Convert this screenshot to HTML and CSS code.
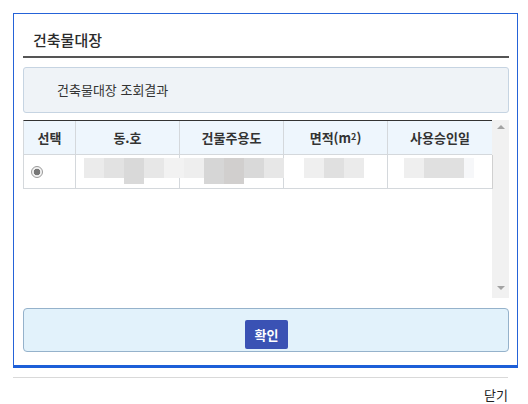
FILE: index.html
```html
<!DOCTYPE html>
<html lang="ko">
<head>
<meta charset="utf-8">
<link rel="stylesheet" href="styles.css">
</head>
<body>
<div class="panel">
  <div class="title">건축물대장</div>
  <div class="info">건축물대장 조회결과</div>
  <div class="tablewrap">
    <div class="grid">
      <div class="th">선택</div>
      <div class="th">동.호</div>
      <div class="th">건물주용도</div>
      <div class="th">면적(m<sup>2</sup>)</div>
      <div class="th last">사용승인일</div>
      <div class="td first"><span class="radio"></span></div>
      <div class="td blur b2">
        <i class="m c1"></i><i class="m c2"></i><i class="m c3 tall"></i><i class="m c4"></i><i class="m c5"></i>
      </div>
      <div class="td blur b3">
        <i class="m c6"></i><i class="m c7 tall"></i><i class="m c8 tall"></i><i class="m c3"></i><i class="m c4"></i>
      </div>
      <div class="td blur b4">
        <i class="m c9"></i><i class="m c10"></i><i class="m c11"></i>
      </div>
      <div class="td blur b5 last">
        <i class="m c9"></i><i class="m c10"></i><i class="m c10"></i><i class="m c12 half"></i>
      </div>
    </div>
    <div class="scroll">
      <span class="arr up"></span>
      <span class="arr down"></span>
    </div>
  </div>
  <div class="actions"><button class="btn">확인</button></div>
</div>
<div class="footer"><span class="close">닫기</span></div>
</body>
</html>
```
FILE: styles.css
```css
* { box-sizing: border-box; }
body {
  margin: 0;
  font-family: "Noto Sans CJK KR", "Noto Sans", sans-serif;
  color: #333;
  background: #fff;
}
.panel {
  margin: 13px 0 0 13px;
  width: 505px;
  height: 355px;
  border: 1px solid #2563d8;
  border-bottom: 3px solid #1d5fd8;
  padding: 0 8px 0 9px;
  display: flex;
  flex-direction: column;
}
.title {
  height: 44px;
  padding: 16px 0 0 10px;
  border-bottom: 2px solid #555;
  font-size: 15px;
  line-height: 20px;
  font-weight: 500;
  color: #2b2b2b;
}
.info {
  margin-top: 9px;
  height: 46px;
  border: 1px solid #c6d4e2;
  border-radius: 3px;
  background: #eff3f7;
  padding-left: 33px;
  font-size: 13px;
  line-height: 44px;
  color: #333;
}
.tablewrap {
  margin-top: 7px;
  height: 178px;
  display: flex;
  align-items: flex-start;
}
.grid {
  width: 469px;
  display: grid;
  grid-template-columns: 52px 104px 104px 104px 105px;
  grid-template-rows: 34px 34px;
  border-top: 1px solid #333;
  border-left: 1px solid #d4d8dc;
}
.th {
  background: #eef6fd;
  border-right: 1px solid #d4d8dc;
  border-bottom: 1px solid #d4d8dc;
  font-size: 13px;
  font-weight: 700;
  color: #333;
  display: flex;
  align-items: center;
  justify-content: center;
}
.th sup { font-size: 9px; line-height: 0; position: relative; top: -1px; }
.td {
  border-right: 1px solid #d4d8dc;
  border-bottom: 1px solid #d4d8dc;
  display: flex;
  align-items: center;
  justify-content: center;
  position: relative;
}
.first { justify-content: flex-start; padding-left: 7px; }
.last { border-right: 1px solid #d0d0d0; }
.radio {
  width: 12px;
  height: 12px;
  border-radius: 50%;
  border: 1px solid #999;
  background: radial-gradient(circle, #777 0 3px, #f2f2f2 3.6px);
}
.blur { justify-content: flex-start; align-items: flex-start; }
.m {
  display: block;
  width: 20px;
  height: 20px;
  flex: none;
}
.tall { height: 26px; }
.half { width: 10px; }
.b2 { padding: 3px 0 0 8px; }
.b3 { padding: 3px 0 0 4px; }
.b4 { padding: 3px 0 0 20px; }
.b5 { padding: 3px 0 0 16px; }
.b2 .c5 { margin-right: -15px; position: relative; z-index: 1; }
.c1 { background: #ebebeb; }
.c2 { background: #e2e2e2; }
.c3 { background: #d9d9d9; }
.c4 { background: #e7e7e7; }
.c5 { background: #f2f2f2; }
.c6 { background: #eeeeee; }
.c7 { background: #d6d6d6; }
.c8 { background: #d1cfce; }
.c9 { background: #efefef; }
.c10 { background: #e0e0e0; }
.c11 { background: #ebebeb; }
.c12 { background: #f6f7f9; }
.scroll {
  width: 17px;
  height: 178px;
  background: #f1f1f1;
  display: flex;
  flex-direction: column;
  justify-content: space-between;
  align-items: center;
  padding: 5px 0 8px;
}
.arr {
  width: 0;
  height: 0;
  border-left: 4px solid transparent;
  border-right: 4px solid transparent;
}
.up { border-bottom: 4px solid #a3a3a3; }
.down { border-top: 4px solid #a3a3a3; }
.actions {
  margin-top: 10px;
  height: 44px;
  border: 1px solid #95b2cb;
  border-radius: 4px;
  background: #e2f2fb;
  display: flex;
  justify-content: center;
  padding-top: 11px;
}
.btn {
  width: 43px;
  height: 29px;
  border: none;
  border-radius: 2px;
  background: #3a52b4;
  color: #fff;
  font-family: "Noto Sans CJK KR", sans-serif;
  font-size: 13px;
  font-weight: 700;
  padding: 0;
  margin-left: 1px;
}
.footer {
  margin: 9px 0 0 13px;
  width: 495px;
  border-top: 1px solid #d9d9d9;
  display: flex;
  justify-content: flex-end;
  padding-top: 7px;
}
.close {
  font-size: 13px;
  color: #222;
  line-height: 20px;
}
```
